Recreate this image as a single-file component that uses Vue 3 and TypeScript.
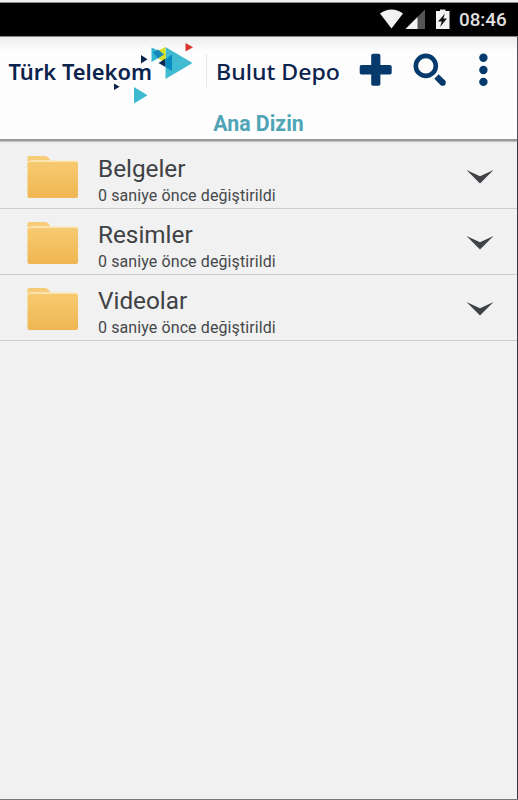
<script setup lang="ts">
interface Folder {
  name: string
  modified: string
}

const folders: Folder[] = [
  { name: 'Belgeler', modified: '0 saniye önce değiştirildi' },
  { name: 'Resimler', modified: '0 saniye önce değiştirildi' },
  { name: 'Videolar', modified: '0 saniye önce değiştirildi' },
]
</script>

<template>
  <div class="screen">
    <div class="status">
      <svg class="status-icons" width="70" height="33" viewBox="0 0 70 33">
        <path d="M0 10.500Q11.500 2.500 23 10.500L11.500 25.500Z" fill="#f2f2f2" />
        <path d="M45 6.500V26H25.500Z" fill="#555" />
        <path d="M37.500 14V26H25.500Z" fill="#f2f2f2" />
        <path d="M56 8h4V6.500h5.500V8h4v18H56Z" fill="#f2f2f2" />
        <path d="M65 10.500L58 18.500H61.800L60 24L67 15.500H63.300Z" fill="#111" />
      </svg>
      <span class="clock">08:46</span>
    </div>
    <div class="body">
      <header class="header">
        <div class="bar">
          <svg class="brand" width="350" height="68" viewBox="0 37 350 68">
            <text class="logo" x="8.500" y="79.500" textLength="143.500" lengthAdjust="spacingAndGlyphs">Türk Telekom</text>
            <path d="M141 55V63.500L147.500 59.200Z" fill="#0a2449" />
            <path d="M114 83.500V90L119.700 86.800Z" fill="#0a2449" />
            <path d="M134 87V103.500L147.500 95.300Z" fill="#3ebad0" />
            <path d="M185.500 43V51.500L193 47.200Z" fill="#d5352c" />
            <path d="M165.500 47V79L192.500 63Z" fill="#40bbd1" />
            <path d="M151.500 47.500L165.500 54L151.500 62Z" fill="#31b5d3" />
            <path d="M165.500 47V60L156.500 51.500Z" fill="#d7df22" />
            <path d="M153 52.500L158 49.500L164 54.500L158 58.500Z" fill="#1589bd" />
            <path d="M158 58.500L165.500 54V62.500Z" fill="#d7df22" />
            <path d="M165.500 58.500V67L158.500 63Z" fill="#092a54" />
            <path d="M165.500 59L172 54.500V71L165.500 67Z" fill="#078cc1" />
            <path d="M206.500 54V89" stroke="#e8e8ea" />
            <text class="product" x="216" y="79.800" textLength="124" lengthAdjust="spacingAndGlyphs">Bulut Depo</text>
          </svg>
          <svg class="actions" width="168" height="68" viewBox="350 37 168 68">
            <g fill="#063a6c">
              <rect x="359.700" y="65" width="32" height="9.500" rx="1.800" />
              <rect x="371.200" y="53.800" width="9.200" height="32" rx="1.800" />
              <circle cx="483.400" cy="57.800" r="4.200" />
              <circle cx="483.400" cy="70" r="4.200" />
              <circle cx="483.400" cy="81.900" r="4.200" />
            </g>
            <circle cx="425.800" cy="65.900" r="10" fill="none" stroke="#063a6c" stroke-width="4.600" />
            <path d="M436.500 76.500L442.700 82.700" stroke="#063a6c" stroke-width="6.200" />
            <circle cx="442.700" cy="82.700" r="3.100" fill="#063a6c" />
          </svg>
        </div>
        <h1 class="title">Ana Dizin</h1>
      </header>
      <ul class="list">
        <li v-for="folder in folders" :key="folder.name" class="row">
          <svg class="folder" width="52" height="44" viewBox="0 0 52 44">
            <defs>
              <linearGradient id="face" x1="0" y1="0" x2="0" y2="1">
                <stop offset="0" stop-color="#f7ca70" />
                <stop offset="1" stop-color="#efb652" />
              </linearGradient>
            </defs>
            <path d="M.5 9V3Q.5 1 2.500 1H18Q20 1 21.500 3L24 5.500H49Q51 5.500 51 7.500V12H.5Z" fill="#fbe3b0" />
            <path d="M.5 6V3Q.5 1 2.500 1H18Q20 1 21.500 3L23 5H5Z" fill="#f6cc78" />
            <rect x=".5" y="7" width="50.500" height="36" rx="2" fill="url(#face)" />
          </svg>
          <div class="info">
            <span class="name">{{ folder.name }}</span>
            <span class="modified">{{ folder.modified }}</span>
          </div>
          <svg class="chevron" width="28" height="16" viewBox="0 0 28 16">
            <path d="M.5 1L14 7.300L27.500 1L14 14.500Z" fill="#404346" />
          </svg>
        </li>
      </ul>
    </div>
  </div>
</template>

<style>
body {
  margin: 0;
}
</style>

<style scoped>
.screen {
  box-sizing: border-box;
  width: 518px;
  height: 800px;
  display: flex;
  flex-direction: column;
  overflow: hidden;
  border-top: 2px solid #f0f0f0;
  border-bottom: 1px solid #777;
  background: #f1f1f1;
  font-family: Roboto, "Liberation Sans", sans-serif;
}
.status {
  box-sizing: border-box;
  height: 35px;
  flex: none;
  display: flex;
  align-items: center;
  justify-content: flex-end;
  gap: 9px;
  padding-right: 11px;
  background: #000;
  border-top: 1px solid #8d8d8d;
  border-bottom: 1px solid #858585;
}
.status-icons {
  flex: none;
}
.clock {
  width: 48px;
  color: #e0e0e0;
  font-size: 18.800px;
  font-weight: 500;
  line-height: 33px;
  white-space: nowrap;
  padding-top: 1px;
}
.body {
  flex: 1;
  border-right: 1px solid #33373b;
}
.header {
  box-sizing: border-box;
  height: 104px;
  background: linear-gradient(#ededed, #fdfdfd 14px, #fefefe);
  border-bottom: 2px solid #989898;
  box-shadow: 0 1px 1px #c4c4c4;
}
.bar {
  display: flex;
  height: 68px;
  width: 518px;
}
.brand,
.actions {
  flex: none;
}
.logo,
.product {
  fill: #0b234d;
  font-family: "Noto Sans", "Open Sans", sans-serif;
  font-size: 22px;
  font-weight: 600;
}
.product {
  font-weight: 500;
}
.title {
  margin: 0;
  padding-top: 6px;
  font-size: 21.300px;
  line-height: 26px;
  font-weight: 700;
  color: #4fa4b5;
  text-align: center;
}
.list {
  list-style: none;
  margin: 0;
  padding: 2px 0 0;
}
.row {
  box-sizing: border-box;
  height: 66px;
  display: flex;
  align-items: flex-start;
  padding: 12px 23px 0 27px;
  border-bottom: 1px solid #cdcdcd;
}
.info {
  flex: 1;
  display: flex;
  flex-direction: column;
  margin-left: 19px;
}
.name {
  font-size: 24.300px;
  line-height: 28px;
  color: #3f4245;
}
.modified {
  font-size: 16px;
  letter-spacing: 0.1px;
  line-height: 20px;
  margin-top: 3px;
  color: #45484b;
}
.chevron {
  margin-top: 14px;
}
</style>
